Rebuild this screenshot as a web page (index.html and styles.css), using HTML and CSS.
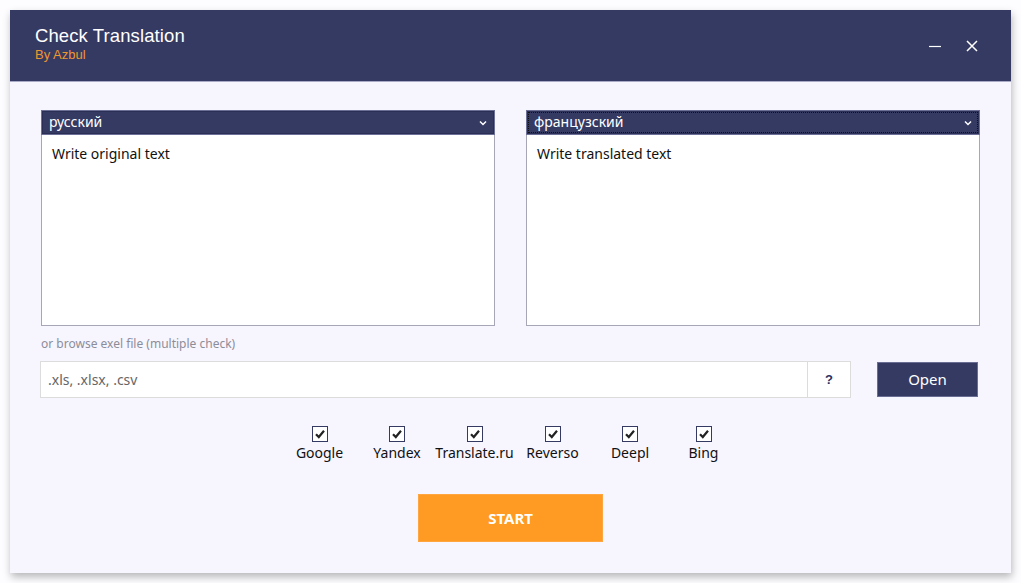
FILE: index.html
```html
<!DOCTYPE html>
<html lang="en">
<head>
<meta charset="utf-8">
<title>Check Translation</title>
<link rel="stylesheet" href="styles.css">
</head>
<body>
<div class="window">
  <header class="titlebar">
    <div class="brand">
      <div class="title">Check Translation</div>
      <div class="subtitle">By Azbul</div>
    </div>
    <div class="controls">
      <span class="ctl min"><svg width="14" height="14" viewBox="0 0 14 14"><path d="M1 7.5h12" stroke="#fff" stroke-width="1.2"/></svg></span>
      <span class="ctl close"><svg width="12" height="12" viewBox="0 0 12 12"><path d="M1 1L11 11M11 1L1 11" stroke="#fff" stroke-width="1.5"/></svg></span>
    </div>
  </header>
  <main class="content">
    <div class="panes">
      <div class="pane">
        <div class="select"><span>русский</span><svg class="chev" width="8" height="6" viewBox="0 0 8 6"><path d="M1 1.5L4 4.5L7 1.5" stroke="#fff" stroke-width="1.5" fill="none"/></svg></div>
        <div class="textbox">Write original text</div>
      </div>
      <div class="pane">
        <div class="select focused"><span>французский</span><svg class="chev" width="8" height="6" viewBox="0 0 8 6"><path d="M1 1.5L4 4.5L7 1.5" stroke="#fff" stroke-width="1.5" fill="none"/></svg></div>
        <div class="textbox">Write translated text</div>
      </div>
    </div>
    <div class="hint">or browse exel file (multiple check)</div>
    <div class="filerow">
      <div class="fileinput">
        <span class="placeholder">.xls, .xlsx, .csv</span>
        <span class="help">?</span>
      </div>
      <button class="open">Open</button>
    </div>
    <div class="services">
      <label class="svc" style="width:78px"><span class="box"><svg width="12" height="12" viewBox="0 0 12 12"><path d="M2 6.2L4.8 9L10 2.8" stroke="#222" stroke-width="2.2" fill="none"/></svg></span>Google</label>
      <label class="svc" style="width:77px"><span class="box"><svg width="12" height="12" viewBox="0 0 12 12"><path d="M2 6.2L4.8 9L10 2.8" stroke="#222" stroke-width="2.2" fill="none"/></svg></span>Yandex</label>
      <label class="svc" style="width:78px"><span class="box"><svg width="12" height="12" viewBox="0 0 12 12"><path d="M2 6.2L4.8 9L10 2.8" stroke="#222" stroke-width="2.2" fill="none"/></svg></span>Translate.ru</label>
      <label class="svc" style="width:78px"><span class="box"><svg width="12" height="12" viewBox="0 0 12 12"><path d="M2 6.2L4.8 9L10 2.8" stroke="#222" stroke-width="2.2" fill="none"/></svg></span>Reverso</label>
      <label class="svc" style="width:77px"><span class="box"><svg width="12" height="12" viewBox="0 0 12 12"><path d="M2 6.2L4.8 9L10 2.8" stroke="#222" stroke-width="2.2" fill="none"/></svg></span>Deepl</label>
      <label class="svc" style="width:70px"><span class="box"><svg width="12" height="12" viewBox="0 0 12 12"><path d="M2 6.2L4.8 9L10 2.8" stroke="#222" stroke-width="2.2" fill="none"/></svg></span>Bing</label>
    </div>
    <div class="startrow"><button class="start">START</button></div>
  </main>
</div>
</body>
</html>
```
FILE: styles.css
```css
* { box-sizing: border-box; }
html, body { margin: 0; padding: 0; }
body {
  background: #fdfdff;
  font-family: "Noto Sans", "Open Sans", "Liberation Sans", sans-serif;
  padding: 10px;
  width: 1021px;
  height: 583px;
  overflow: hidden;
}
.window {
  width: 1001px;
  height: 563px;
  background: #f7f5fe;
  box-shadow: 1px 4px 8px rgba(0,0,0,0.28);
  display: flex;
  flex-direction: column;
}
.titlebar {
  height: 72px;
  flex-shrink: 0;
  background: #353a63;
  border-bottom: 1px solid #a9abc8;
  display: flex;
  justify-content: space-between;
  align-items: flex-start;
  padding: 15px 33px 0 25px;
}
.title {
  font-family: "Liberation Sans", "DejaVu Sans", sans-serif;
  color: #ffffff;
  font-size: 18.5px;
  line-height: 22px;
  letter-spacing: 0.1px;
}
.subtitle {
  font-family: "Liberation Sans", "DejaVu Sans", sans-serif;
  color: #f0962e;
  font-size: 13px;
  line-height: 16px;
  margin-top: 0;
}
.controls {
  display: flex;
  align-items: center;
  gap: 24px;
  margin-top: 14px;
}
.ctl { display: flex; align-items: center; justify-content: center; }
.content {
  flex: 1;
  padding: 28px 31px 0 31px;
  display: flex;
  flex-direction: column;
}
.panes {
  display: flex;
  gap: 31px;
}
.pane { width: 454px; display: flex; flex-direction: column; }
.select {
  height: 25px;
  background: #353a63;
  border: 1px solid #6d7096;
  box-shadow: inset 0 0 0 1px #2b2f55;
  color: #fff;
  font-size: 14px;
  display: flex;
  align-items: center;
  justify-content: space-between;
  padding: 0 7px 2px 7px;
}
.select span { line-height: 20px; }
.select .chev { margin-top: 2px; }
.select.focused { outline: 1px dotted #111; outline-offset: -3px; }
.textbox {
  height: 191px;
  background: #ffffff;
  border: 1px solid #a6a6b6;
  border-top: none;
  padding: 9px 10px;
  font-size: 14px;
  color: #111;
}
.hint {
  margin-top: 9px;
  font-size: 12px;
  color: #8d8d99;
  line-height: 17px;
}
.filerow {
  margin-top: 9px;
  display: flex;
  align-items: center;
  margin-left: -1px;
}
.fileinput {
  width: 811px;
  height: 37px;
  background: #fff;
  border: 1px solid #dcdcdc;
  display: flex;
  align-items: stretch;
}
.placeholder {
  flex: 1;
  padding-left: 7px;
  display: flex;
  align-items: center;
  font-size: 14px;
  color: #666;
}
.help {
  width: 43px;
  border-left: 1px solid #dcdcdc;
  display: flex;
  align-items: center;
  justify-content: center;
  font-weight: bold;
  font-size: 13px;
  color: #2d3160;
  font-family: "Liberation Sans", sans-serif;
}
.open {
  margin-left: 26px;
  width: 101px;
  height: 35px;
  background: #353a63;
  border: 1px solid #6a6d93;
  color: #fff;
  font-family: "Noto Sans", sans-serif;
  font-size: 15px;
  padding: 0 0 2px 0;
}
.services {
  margin-top: 28px;
  display: flex;
  justify-content: center;
  padding-right: 2px;
}
.svc {
  display: flex;
  flex-direction: column;
  align-items: center;
  font-size: 14px;
  color: #111;
  line-height: 18px;
  white-space: nowrap;
}
.box {
  width: 16px;
  height: 16px;
  border: 1.5px solid #353a63;
  background: #fff;
  display: flex;
  align-items: center;
  justify-content: center;
  margin-bottom: 2px;
}
.startrow {
  margin-top: 32px;
  display: flex;
  justify-content: center;
}
.start {
  width: 185px;
  height: 48px;
  background: #ff9a22;
  border: 1px solid #ffa640;
  color: #fff;
  font-weight: bold;
  font-family: "Noto Sans", sans-serif;
  font-size: 15px;
  padding: 0;
}
```
